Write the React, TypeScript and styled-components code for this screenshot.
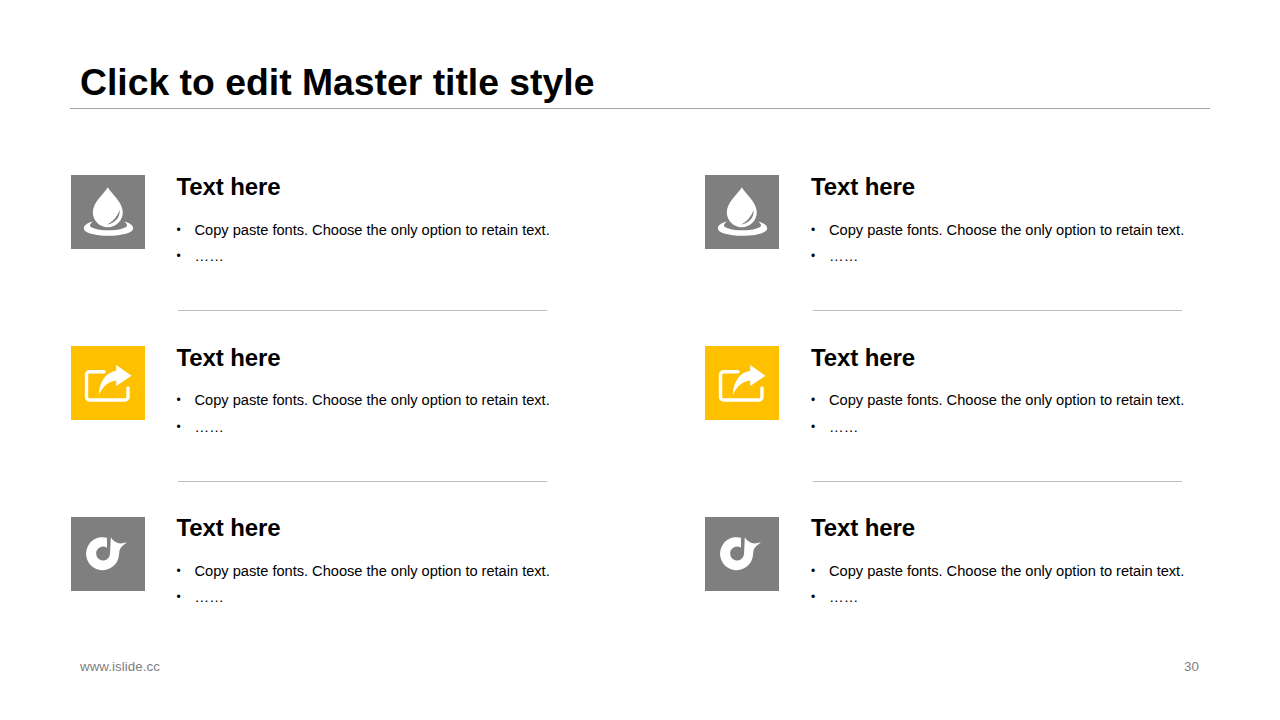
import React from 'react';
import styled, { createGlobalStyle } from 'styled-components';

const GlobalStyle = createGlobalStyle`
    html, body {
        margin: 0;
        padding: 0;
        background: #fff;
    }
    body {
        font-family: "Liberation Sans", Arial, sans-serif;
    }
`;

const DropIcon = () => (
    <svg width='74' height='74' viewBox='0 0 74 74'>
        <path fill='#fff' d='M22 46.500C16 48 12.800 50.500 12.800 53.500C12.800 57.800 24 60.800 37.500 60.800S62.200 57.800 62.200 53.500C62.200 50.500 59 48 53 46.500C55 47.800 56 49 56 50.500C56 53 48 55.300 37.500 55.300S19 53 19 50.500C19 49 20 47.800 22 46.500Z'/>
        <path fill='#fff' fillRule='evenodd' d='M36.800 12.300C34 18 21.800 27 21.800 37.300C21.800 45.600 28.500 52.300 36.800 52.300S51.800 45.600 51.800 37.300C51.800 27 39.500 18 36.800 12.300ZM48.500 35C49.500 42 44 48.500 36 49.500C41 47 46.500 42 48.500 35Z'/>
    </svg>
);

const ShareIcon = () => (
    <svg width='74' height='74' viewBox='0 0 74 74'>
        <path fill='none' stroke='#fff' strokeWidth='3.400' strokeLinecap='round' d='M33 25.700H18.500a3 3 0 0 0-3 3V51a3 3 0 0 0 3 3h35.500a3 3 0 0 0 3-3V42'/>
        <path fill='#fff' d='M45.200 19L60.500 29.700L45.200 40V34.500C38 35 32 40 27.800 49C28 36 35 26 45.200 24.700Z'/>
    </svg>
);

const RdioIcon = () => (
    <svg width='74' height='74' viewBox='0 0 74 74'>
        <path fill='#fff' fillRule='evenodd' d='M36 20.800A16.500 16.500 0 1 0 48 38C48.200 35 48.500 33 49.300 31.500C50.800 29 53.500 27 56 25.200C52.500 26.300 49.300 26.800 46.800 26C43.800 25 41.500 23 39.800 20.300L39 37A7 7 0 1 1 36 30.700Z'/>
    </svg>
);

type Variant = 'drop' | 'share' | 'rdio';

const icons: Record<Variant, React.ReactNode> = {
    drop: <DropIcon/>,
    share: <ShareIcon/>,
    rdio: <RdioIcon/>,
};

const rows: Variant[] = ['drop', 'share', 'rdio'];

const Feature = ({ variant, last }: { variant: Variant; last: boolean }) => (
    <FeatureRow>
        <IconTile $accent={variant === 'share'}>{icons[variant]}</IconTile>
        <FeatureBody>
            <FeatureTitle>Text here</FeatureTitle>
            <BulletList>
                <li>Copy paste fonts. Choose the only option to retain text.</li>
                <li>……</li>
            </BulletList>
            {!last && <Divider/>}
        </FeatureBody>
    </FeatureRow>
);

const Column = () => (
    <FeatureColumn>
        {rows.map((variant, i) => (
            <Feature key={variant} variant={variant} last={i === rows.length - 1}/>
        ))}
    </FeatureColumn>
);

const App = () => (
    <Slide>
        <GlobalStyle/>
        <Header>
            <Title>Click to edit Master title style</Title>
        </Header>
        <Columns>
            <Column/>
            <Column/>
        </Columns>
        <Footer>
            <span>www.islide.cc</span>
            <span>30</span>
        </Footer>
    </Slide>
);

const Slide = styled.div`
    width: 1280px;
    height: 720px;
    display: flex;
    flex-direction: column;
    overflow: hidden;
    background: #fff;
    color: #000;
`;

const Header = styled.header`
    margin: 60px 70px 0;
    height: 48px;
    padding-left: 10px;
    border-bottom: 1px solid #a6a6a6;
`;

const Title = styled.h1`
    margin: 0;
    font-size: 37.33px;
    line-height: 44px;
    font-weight: 700;
`;

const Columns = styled.main`
    display: grid;
    grid-template-columns: 634.5px 1fr;
    margin: 66.4px 0 0 70.5px;
    height: 483.6px;
`;

const FeatureColumn = styled.div`
    display: flex;
    flex-direction: column;
`;

const FeatureRow = styled.section`
    display: flex;
    height: 170.7px;
`;

const IconTile = styled.div<{ $accent: boolean }>`
    flex: none;
    width: 74px;
    height: 74px;
    background: ${p => (p.$accent ? '#ffc000' : '#7f7f7f')};
`;

const FeatureBody = styled.div`
    margin-left: 32px;
    width: 380px;
    display: flex;
    flex-direction: column;
`;

const FeatureTitle = styled.h2`
    margin: -0.4px 0 0;
    font-size: 24px;
    line-height: 24px;
    font-weight: 700;
    letter-spacing: -0.1px;
`;

const BulletList = styled.ul`
    margin: 17.8px 0 0;
    padding: 0;
    list-style: none;
    font-size: 14.67px;
    line-height: 26.2px;
    letter-spacing: -0.03px;

    li {
        position: relative;
        padding-left: 18px;
        height: 26.2px;
        white-space: nowrap;
    }
    li::before {
        content: '•';
        position: absolute;
        left: 0;
        font-size: 12px;
    }
`;

const Divider = styled.hr`
    margin: 41.2px 0 0 1.5px;
    width: 369px;
    height: 1px;
    border: 0;
    background: #bfbfbf;
`;

const Footer = styled.footer`
    display: flex;
    justify-content: space-between;
    margin: 0 81px 0 80px;
    font-size: 13.33px;
    line-height: 16px;
    letter-spacing: 0.05px;
    color: #7f7f7f;
`;

export default App;
